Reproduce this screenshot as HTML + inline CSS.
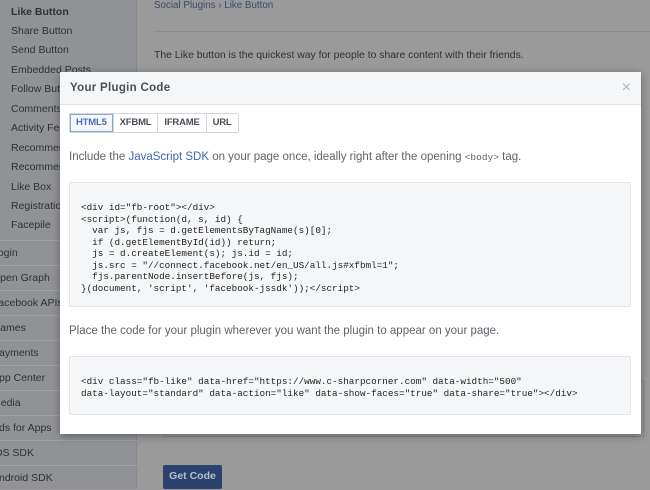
<!DOCTYPE html>
<html><head><style>
*{margin:0;padding:0;box-sizing:border-box}
body{width:650px;height:489px;overflow:hidden;position:relative;background:#9a9a9a;font-family:"Liberation Sans",sans-serif}
.side{position:absolute;left:0;top:0;width:137px;height:489px;background:#909296;border-right:1px solid #85888c}
.side .it{position:absolute;left:11px;font-size:10.5px;color:#2e3136;white-space:nowrap}
.side .b{position:absolute;left:-8px;width:145px;font-size:10.5px;color:#2e3136;white-space:nowrap;border-top:1px solid #9fa2a6;height:25px;line-height:24px}
.main{position:absolute;left:137px;top:0;right:0;height:489px}
.mono{font-family:"Liberation Mono",monospace}
.modal{position:absolute;left:60px;top:72px;width:581px;height:362px;background:#fff;box-shadow:0 2px 8px rgba(0,0,0,.35)}
.hd{height:33px;background:#f5f6f7;border-bottom:1px solid #e5e5e5;position:relative}
.hd b{position:absolute;left:10px;top:10px;font-size:11.5px;color:#4b4f56;letter-spacing:.3px}
.hd span{position:absolute;right:10px;top:7px;font-size:16px;color:#b0b3b8}
.tabs{position:absolute;left:9px;top:41px;height:20px;display:flex;border:1px solid #d3d6db;border-radius:2px}
.tabs div{font-size:9.5px;font-weight:bold;color:#4b4f56;padding:0 6px;line-height:18px;border-left:1px solid #d3d6db;letter-spacing:-.2px}
.tabs div:first-child{border-left:none;color:#4a6fc0;background:#f6f7f9;box-shadow:inset 0 0 0 1px #8aa3d8}
p.t{position:absolute;left:9px;font-size:11.5px;color:#5f636a;white-space:nowrap}
.code{position:absolute;left:9px;width:562px;background:#f5f6f7;border:1px solid #e3e5e8;border-radius:2px;font-family:"Liberation Mono",monospace;font-size:9.3px;color:#222;white-space:pre;line-height:11.5px;padding-left:11px}
</style></head><body>
<div class="side">
<div class="it" style="top:6px;font-weight:bold">Like Button</div>
<div class="it" style="top:25px">Share Button</div>
<div class="it" style="top:44px">Send Button</div>
<div class="it" style="top:64px">Embedded Posts</div>
<div class="it" style="top:83px">Follow Button</div>
<div class="it" style="top:103px">Comments</div>
<div class="it" style="top:122px">Activity Feed</div>
<div class="it" style="top:142px">Recommendations</div>
<div class="it" style="top:161px">Recommendations</div>
<div class="it" style="top:181px">Like Box</div>
<div class="it" style="top:200px">Registration</div>
<div class="it" style="top:219px">Facepile</div>
<div class="b" style="top:240px">Login</div>
<div class="b" style="top:265px">Open Graph</div>
<div class="b" style="top:290px">Facebook APIs</div>
<div class="b" style="top:315px">Games</div>
<div class="b" style="top:340px">Payments</div>
<div class="b" style="top:365px">App Center</div>
<div class="b" style="top:390px">Media</div>
<div class="b" style="top:415px">Ads for Apps</div>
<div class="b" style="top:440px">iOS SDK</div>
<div class="b" style="top:465px">Android SDK</div>
</div>
<div class="main">
<div style="position:absolute;left:17px;top:0;font-size:9.8px;color:#3c4a6a">Social Plugins › Like Button</div>
<div style="position:absolute;left:17px;right:0;top:31px;border-top:1px solid #8c8c8c"></div>
<div style="position:absolute;left:17px;top:50px;font-size:10.4px;color:#2f3136">The Like button is the quickest way for people to share content with their friends.</div>
<div style="position:absolute;left:27px;top:380px;width:480px;height:57px;border:1px solid #888"></div>
<div style="position:absolute;left:26px;top:465px;width:59px;height:24px;background:#2c426e;color:#b8c0d0;font-size:10.5px;font-weight:bold;line-height:22px;text-align:center;border-radius:2px">Get Code</div>
</div>
<div class="modal">
<div class="hd"><b>Your Plugin Code</b><span>×</span></div>
<div class="tabs"><div>HTML5</div><div>XFBML</div><div>IFRAME</div><div>URL</div></div>
<p class="t" style="top:79px">Include the <span style="color:#4267b2">JavaScript SDK</span> on your page once, ideally right after the opening <span class="mono" style="font-size:9.5px">&lt;body&gt;</span> tag.</p>
<div class="code" style="top:110px;height:125px;padding-top:19px">&lt;div id="fb-root"&gt;&lt;/div&gt;
&lt;script&gt;(function(d, s, id) {
  var js, fjs = d.getElementsByTagName(s)[0];
  if (d.getElementById(id)) return;
  js = d.createElement(s); js.id = id;
  js.src = "//connect.facebook.net/en_US/all.js#xfbml=1";
  fjs.parentNode.insertBefore(js, fjs);
}(document, 'script', 'facebook-jssdk'));&lt;/script&gt;</div>
<p class="t" style="top:253px">Place the code for your plugin wherever you want the plugin to appear on your page.</p>
<div class="code" style="top:284px;height:59px;padding-top:19px">&lt;div class="fb-like" data-href="https://www.c-sharpcorner.com" data-width="500"
data-layout="standard" data-action="like" data-show-faces="true" data-share="true"&gt;&lt;/div&gt;</div>
</div>
</body></html>
